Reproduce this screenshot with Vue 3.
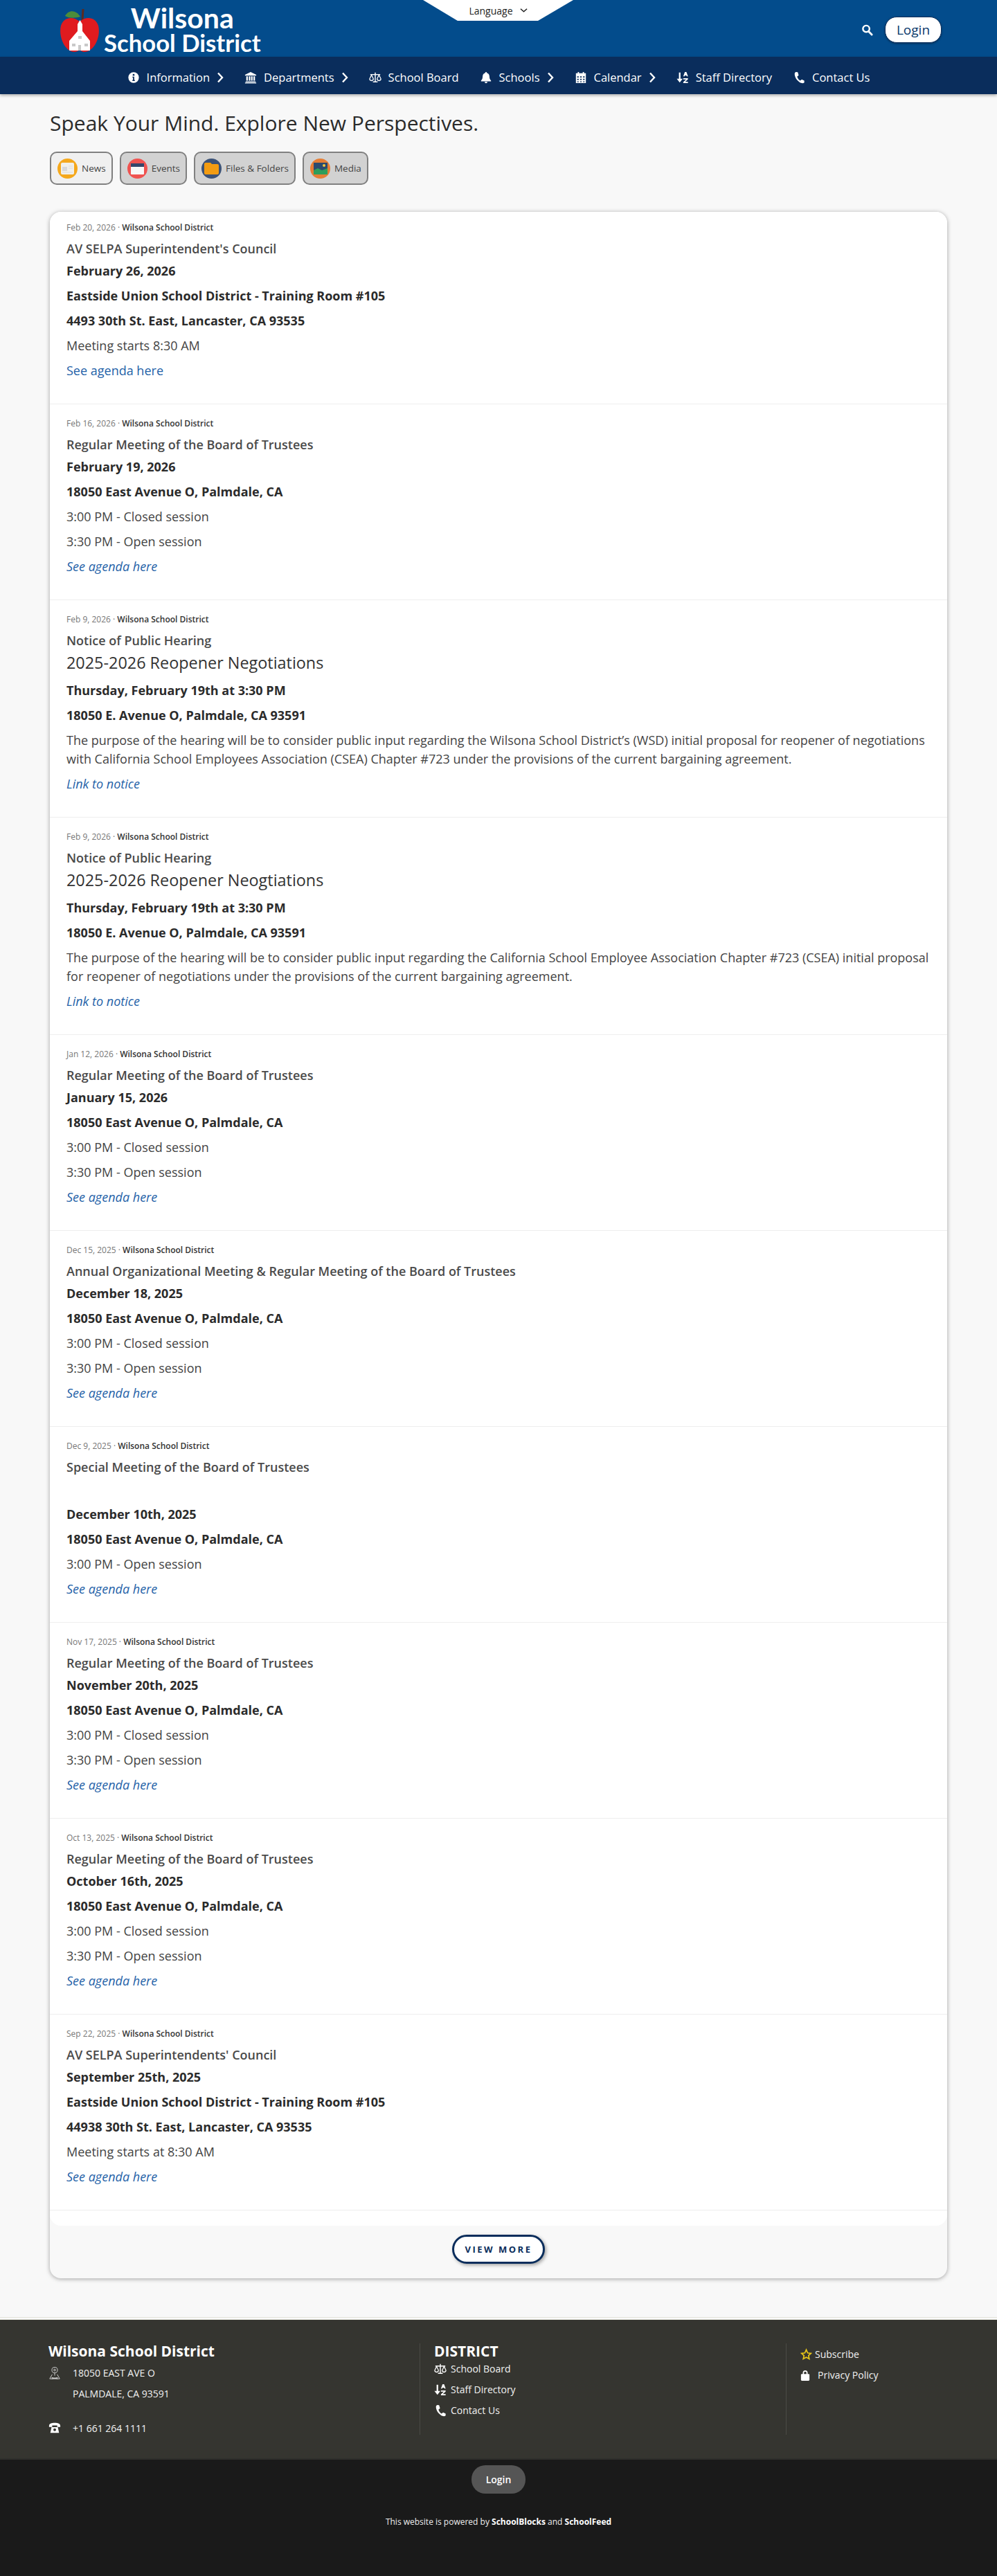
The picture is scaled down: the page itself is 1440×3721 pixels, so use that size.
<script setup>
const navItems = [
  { label: 'Information', icon: 'info', more: true },
  { label: 'Departments', icon: 'bank', more: true },
  { label: 'School Board', icon: 'scale', more: false },
  { label: 'Schools', icon: 'bell', more: true },
  { label: 'Calendar', icon: 'calendar', more: true },
  { label: 'Staff Directory', icon: 'sort', more: false },
  { label: 'Contact Us', icon: 'phone', more: false }
]

const tabs = [
  { label: 'News', kind: 'news', active: true },
  { label: 'Events', kind: 'events' },
  { label: 'Files & Folders', kind: 'files' },
  { label: 'Media', kind: 'media' }
]

const board = (stamp, day) => ({
  stamp,
  title: 'Regular Meeting of the Board of Trustees',
  bold: [day, '18050 East Avenue O, Palmdale, CA'],
  lines: ['3:00 PM - Closed session', '3:30 PM - Open session'],
  link: 'See agenda here'
})

const posts = [
  {
    stamp: 'Feb 20, 2026',
    title: "AV SELPA Superintendent's Council",
    bold: ['February 26, 2026', 'Eastside Union School District - Training Room #105', '4493 30th St. East, Lancaster, CA 93535'],
    lines: ['Meeting starts 8:30 AM'],
    link: 'See agenda here',
    plainLink: true
  },
  board('Feb 16, 2026', 'February 19, 2026'),
  {
    stamp: 'Feb 9, 2026',
    title: 'Notice of Public Hearing',
    big: '2025-2026 Reopener Negotiations',
    bold: ['Thursday, February 19th at 3:30 PM', '18050 E. Avenue O, Palmdale, CA 93591'],
    lines: ["The purpose of the hearing will be to consider public input regarding the Wilsona School District’s (WSD) initial proposal for reopener of negotiations with California School Employees Association (CSEA) Chapter #723 under the provisions of the current bargaining agreement."],
    link: 'Link to notice'
  },
  {
    stamp: 'Feb 9, 2026',
    title: 'Notice of Public Hearing',
    big: '2025-2026 Reopener Neogtiations',
    bold: ['Thursday, February 19th at 3:30 PM', '18050 E. Avenue O, Palmdale, CA 93591'],
    lines: ['The purpose of the hearing will be to consider public input regarding the California School Employee Association Chapter #723 (CSEA) initial proposal for reopener of negotiations under the provisions of the current bargaining agreement.'],
    link: 'Link to notice'
  },
  board('Jan 12, 2026', 'January 15, 2026'),
  {
    ...board('Dec 15, 2025', 'December 18, 2025'),
    title: 'Annual Organizational Meeting & Regular Meeting of the Board of Trustees'
  },
  {
    stamp: 'Dec 9, 2025',
    title: 'Special Meeting of the Board of Trustees',
    spacer: true,
    bold: ['December 10th, 2025', '18050 East Avenue O, Palmdale, CA'],
    lines: ['3:00 PM - Open session'],
    link: 'See agenda here'
  },
  board('Nov 17, 2025', 'November 20th, 2025'),
  board('Oct 13, 2025', 'October 16th, 2025'),
  {
    stamp: 'Sep 22, 2025',
    title: "AV SELPA Superintendents' Council",
    bold: ['September 25th, 2025', 'Eastside Union School District - Training Room #105', '44938 30th St. East, Lancaster, CA 93535'],
    lines: ['Meeting starts at 8:30 AM'],
    link: 'See agenda here'
  }
]
</script>

<template>
  <div class="page">
    <header class="topbar">
      <a class="logo">
        <svg class="apple" viewBox="0 0 58 66" width="58" height="66">
          <path d="M8 12C14 2 24 4 30 13C24 15 14 16 8 12Z" fill="#4c8c3a" />
          <path d="M34 2L33 18" stroke="#5a2a20" stroke-width="3" />
          <path d="M29 20C38 12 52 13 56 26C60 42 50 64 36 64C32 64 31 62 29 62C27 62 25 64 21 64C8 64 -2 42 2 26C6 13 20 12 29 20Z" fill="#e01b1f" />
          <path d="M26 24L29.500 18L33 24V34L44 48V62H14V48L26 34Z" fill="#fff" />
          <path d="M27 41h5v4h-5zM18 52h5v4h-5zM36 52h5v4h-5zM27 54h4v8h-4z" fill="#c9c9c9" />
        </svg>
        <span class="wordmark">
          <span class="word-top">Wilsona</span>
          <span class="word-bottom">School District</span>
        </span>
      </a>
      <div class="lang">
        <span>Language</span>
        <svg viewBox="0 0 12 8" width="11" height="8"><path d="M1 1.500L6 6L11 1.500" fill="none" stroke="#222" stroke-width="1.600" /></svg>
      </div>
      <div class="top-actions">
        <svg viewBox="0 0 18 18" width="17" height="18"><circle cx="7.500" cy="7.500" r="5" fill="none" stroke="#fff" stroke-width="2.600" /><path d="M11 11.500L16 16.500" stroke="#fff" stroke-width="3" stroke-linecap="round" /></svg>
        <button class="login">Login</button>
      </div>
    </header>

    <nav class="mainnav">
      <a v-for="item in navItems" :key="item.label" class="nav-link">
        <svg class="nav-icon" viewBox="0 0 20 20" fill="#fff">
          <template v-if="item.icon === 'info'">
            <circle cx="10" cy="10" r="8.500" />
            <circle cx="10" cy="5.800" r="1.500" fill="#0a2d5c" />
            <path d="M8 8.500h3v5.500h1v1.500H8V14h1v-4H8z" fill="#0a2d5c" />
          </template>
          <template v-else-if="item.icon === 'bank'">
            <path d="M10 1L19 5.500V7H1V5.500Z" />
            <path d="M3 8h2.500v7H3zM7 8h2.500v7H7zM10.700 8h2.500v7h-2.500zM14.500 8H17v7h-2.500zM2 16h16v1.500H2zM1 18h18v1.500H1z" />
          </template>
          <template v-else-if="item.icon === 'scale'">
            <path d="M9.200 2h1.600v14h3v1.800H6.200V16h3z" />
            <path d="M2 4.500h16V6H2z" />
            <path d="M4 6L1 12a3 3 0 0 0 6 0z" fill="none" stroke="#fff" stroke-width="1.400" />
            <path d="M16 6L13 12a3 3 0 0 0 6 0z" fill="none" stroke="#fff" stroke-width="1.400" />
          </template>
          <template v-else-if="item.icon === 'bell'">
            <path d="M10 1a1.500 1.500 0 0 1 1.500 1.700C14.500 3.500 15.500 6 15.500 9c0 3.500 1.500 4.500 2.500 6v1H2v-1c1-1.500 2.500-2.500 2.500-6 0-3 1-5.500 4-6.300A1.500 1.500 0 0 1 10 1z" />
            <path d="M7.800 17h4.400a2.200 2.200 0 0 1-4.400 0z" />
          </template>
          <template v-else-if="item.icon === 'calendar'">
            <path fill-rule="evenodd" d="M5 1h2v2h6V1h2v2h3v16H2V3h3zM4 8v2h2.500V8zm4.700 0v2h2.600V8zm4.800 0v2H16V8zM4 12v2h2.500v-2zm4.700 0v2h2.600v-2zm4.800 0v2H16v-2zM4 16v1.500h2.500V16zm4.700 0v1.500h2.600V16zm4.800 0v1.500H16V16z" />
          </template>
          <template v-else-if="item.icon === 'sort'">
            <path d="M4 2h2.500v10H10l-4.700 6L.5 12H4z" />
            <path d="M13.500 1h2.500l2.500 7h-2l-.4-1.200h-2.700L13 8h-2zM11 11h7.500v1.800L14 17h4.500v2H11v-1.800L15.500 13H11z" />
          </template>
          <template v-else>
            <path d="M5 1L8 1.500L9.500 6.500L7 8.500C8 11.500 9.500 13.500 12 15L14.500 13L18.500 15V18C17 19.500 14 19.500 11 17.500C6.500 14.500 3 9.500 3 4C3 2.800 3.800 1.500 5 1Z" />
          </template>
        </svg>
        <span>{{ item.label }}</span>
        <svg v-if="item.more" class="nav-chev" viewBox="0 0 10 16"><path d="M2 1.500L8 8L2 14.500" fill="none" stroke="#fff" stroke-width="2.400" /></svg>
      </a>
    </nav>

    <main class="content">
      <h1>Speak Your Mind. Explore New Perspectives.</h1>
      <div class="tabs">
        <button v-for="tab in tabs" :key="tab.label" class="tab" :class="{ active: tab.active }">
          <svg class="tab-icon" viewBox="0 0 29 29">
            <template v-if="tab.kind === 'news'">
              <circle cx="14.500" cy="14.500" r="14.500" fill="#f5a81c" />
              <rect x="5" y="6" width="19" height="17" rx="2" fill="#f1efe9" />
              <rect x="7" y="12" width="7" height="6" fill="#d8d8d8" />
              <path d="M16 11h6M16 14h6M7 20h15" stroke="#dcdcdc" />
            </template>
            <template v-else-if="tab.kind === 'events'">
              <circle cx="14.500" cy="14.500" r="14.500" fill="#ef5350" />
              <rect x="5" y="7" width="19" height="16" rx="1" fill="#f7f7f7" />
              <rect x="5" y="7" width="19" height="5" fill="#34466b" />
            </template>
            <template v-else-if="tab.kind === 'files'">
              <circle cx="14.500" cy="14.500" r="14.500" fill="#3c5378" />
              <path d="M4 8a2 2 0 0 1 2-2h7l2 2h8a2 2 0 0 1 2 2v11a2 2 0 0 1-2 2H6a2 2 0 0 1-2-2z" fill="#f39c12" />
            </template>
            <template v-else>
              <circle cx="14.500" cy="14.500" r="14.500" fill="#e67e35" />
              <rect x="5" y="6" width="20" height="17" fill="#2c4a6e" />
              <path d="M5 23v-6l6-3 6 3 8-3v9z" fill="#2e9e5b" />
              <circle cx="20" cy="10" r="2" fill="#f4c542" />
            </template>
          </svg>
          <span>{{ tab.label }}</span>
        </button>
      </div>

      <section class="feed">
        <div class="feed-list">
          <article v-for="(post, i) in posts" :key="i" class="post">
            <div class="post-meta">{{ post.stamp }} · <b>Wilsona School District</b></div>
            <div class="post-title">{{ post.title }}</div>
            <div v-if="post.big" class="post-big">{{ post.big }}</div>
            <div v-if="post.spacer" class="post-spacer"></div>
            <div class="post-body" :class="{ 'after-big': post.big }">
              <p v-for="line in post.bold" :key="line" class="strong">{{ line }}</p>
              <p v-for="line in post.lines" :key="line">{{ line }}</p>
            </div>
            <a class="post-link" :class="{ plain: post.plainLink }">{{ post.link }}</a>
          </article>
        </div>
        <div class="feed-foot">
          <button class="more">VIEW MORE</button>
        </div>
      </section>
    </main>

    <footer class="footer">
      <div class="foot-col foot-left">
        <h3>Wilsona School District</h3>
        <div class="addr">
          <svg viewBox="0 0 20 22" width="18" height="20" fill="none" stroke="#ddd" stroke-width="1"><circle cx="10" cy="6" r="4.500" /><circle cx="10" cy="6" r="1.500" /><path d="M10 11v4M6 13L2 20h16l-4-7M5 18l10 2M15 18L5 20" /></svg>
          <div>
            <div>18050 EAST AVE O</div>
            <div class="addr-2">PALMDALE, CA 93591</div>
          </div>
        </div>
        <div class="addr tel">
          <svg viewBox="0 0 20 20" width="18" height="18" fill="#fff"><path d="M1 7C1 3 5 2 10 2s9 1 9 5v1.500h-5V6H6v2.500H1z" /><path d="M5 9h10l2 9H3z" /><circle cx="10" cy="13" r="2.200" fill="#353530" /></svg>
          <span>+1 661 264 1111</span>
        </div>
      </div>
      <div class="foot-col foot-mid">
        <h3>DISTRICT</h3>
        <a class="foot-link">
          <svg viewBox="0 0 20 20" width="18" height="18" fill="#fff"><path d="M9.200 2h1.600v14h3v1.800H6.200V16h3zM2 4.500h16V6H2z" /><path d="M4 6L1 12a3 3 0 0 0 6 0zM16 6L13 12a3 3 0 0 0 6 0z" fill="none" stroke="#fff" stroke-width="1.400" /></svg>
          School Board
        </a>
        <a class="foot-link">
          <svg viewBox="0 0 20 20" width="18" height="18" fill="#fff"><path d="M4 2h2.500v10H10l-4.700 6L.5 12H4zM13.500 1h2.500l2.500 7h-2l-.4-1.200h-2.700L13 8h-2zM11 11h7.500v1.800L14 17h4.500v2H11v-1.800L15.500 13H11z" /></svg>
          Staff Directory
        </a>
        <a class="foot-link">
          <svg viewBox="0 0 20 20" width="18" height="18" fill="#fff"><path d="M5 1L8 1.500L9.500 6.500L7 8.500C8 11.500 9.500 13.500 12 15L14.500 13L18.500 15V18C17 19.500 14 19.500 11 17.500C6.500 14.500 3 9.500 3 4C3 2.800 3.800 1.500 5 1Z" /></svg>
          Contact Us
        </a>
      </div>
      <div class="foot-col foot-right">
        <a class="foot-link sub">
          <svg viewBox="0 0 20 20" width="17" height="18"><path d="M10 2L12.400 7.400L18 8L13.800 11.800L15 17.500L10 14.600L5 17.500L6.200 11.800L2 8L7.600 7.400Z" fill="none" stroke="#e6c619" stroke-width="2" /></svg>
          Subscribe
        </a>
        <a class="foot-link priv">
          <svg viewBox="0 0 16 20" width="14" height="18" fill="#fff"><path d="M4 9V6a4 4 0 0 1 8 0v3h-2V6a2 2 0 0 0-4 0v3z" /><rect x="1" y="8" width="14" height="11" rx="1.500" /></svg>
          Privacy Policy
        </a>
      </div>
    </footer>

    <div class="subfooter">
      <button class="foot-login">Login</button>
      <p>This website is powered by <b>SchoolBlocks</b> and <b>SchoolFeed</b></p>
    </div>
  </div>
</template>

<style>
html, body {
  margin: 0;
  background: #f8f8f8;
}
</style>

<style scoped>
.page {
  font-family: "Open Sans", "Noto Sans", sans-serif;
  color: #333;
  min-height: 3721px;
  display: flex;
  flex-direction: column;
}

button {
  font-family: inherit;
  cursor: pointer;
}

/* header */
.topbar {
  position: relative;
  height: 82px;
  background: #034c8c;
  display: flex;
  align-items: center;
  padding: 0 80px 0 86px;
}

.logo {
  display: flex;
  align-items: flex-start;
  height: 82px;
}

.apple {
  margin-top: 11px;
  flex-shrink: 0;
}

.wordmark {
  display: flex;
  flex-direction: column;
  align-items: center;
  margin-left: 6px;
  margin-top: 8px;
  color: #fff;
  font-family: Lato, sans-serif;
  font-weight: 700;
}

.word-top {
  font-size: 41px;
  line-height: 36px;
}

.word-bottom {
  font-size: 34.700px;
  line-height: 33px;
  margin-top: 1px;
}

.lang {
  position: absolute;
  top: 0;
  left: 611px;
  width: 217px;
  height: 30px;
  background: #fff;
  clip-path: polygon(0 0, 100% 0, 76.500% 100%, 23% 100%);
  display: flex;
  align-items: center;
  justify-content: center;
  gap: 10px;
  font-size: 14px;
  color: #222;
}

.top-actions {
  margin-left: auto;
  margin-top: 4px;
  display: flex;
  align-items: center;
  gap: 17px;
}

.login {
  width: 82px;
  height: 38px;
  border: 1px solid #0a2d5c;
  border-radius: 17px;
  background: #fff;
  color: #0a3a6b;
  font-size: 19px;
  padding: 0;
  box-shadow: 0 1px 3px rgba(0, 0, 0, 0.4);
}

.mainnav {
  height: 54px;
  box-sizing: border-box;
  padding-top: 5px;
  background: #0a2d5c;
  display: flex;
  align-items: center;
  justify-content: center;
  gap: 30px;
  box-shadow: 0 2px 4px rgba(0, 0, 0, 0.3);
  position: relative;
}

.nav-link {
  display: flex;
  align-items: center;
  gap: 10px;
  color: #fff;
  font-size: 16.500px;
}

.nav-icon {
  width: 18px;
  height: 18px;
}

.nav-chev {
  width: 10px;
  height: 16px;
}

/* main column */
.content {
  padding: 0 72px;
  flex: 1;
}

h1 {
  margin: 20px 0 0;
  font-size: 30px;
  line-height: 44px;
  font-weight: 400;
  color: #2b2b2b;
}

.tabs {
  display: flex;
  gap: 10px;
  margin-top: 19px;
}

.tab {
  height: 48px;
  display: flex;
  align-items: center;
  gap: 6px;
  padding: 0 8px 0 9px;
  border: 2px solid #808080;
  border-radius: 10px;
  background: #d2d2d2;
  color: #444;
  font-size: 13.500px;
}

.tab.active {
  background: #f0f0f0;
}

.tab-icon {
  width: 29px;
  height: 29px;
}

.feed {
  margin-top: 39px;
  border-radius: 16px;
  background: #f8f8f8;
  box-shadow: 0 1px 6px rgba(0, 0, 0, 0.35);
}

.feed-list {
  background: #fff;
  border-radius: 16px;
  padding-bottom: 22px;
}

.post {
  padding: 20px 24px 35px;
  border-bottom: 1px solid #eee;
}

.post:first-child {
  padding-top: 15px;
}

.post-meta {
  font-size: 12px;
  line-height: 16px;
  color: #777;
}

.post-meta b {
  font-weight: 600;
  color: #333;
}

.post-title {
  font-size: 18px;
  line-height: 24px;
  margin-top: 10px;
  font-weight: 600;
  color: #4a4a4a;
}

.post-big {
  font-size: 23.400px;
  line-height: 35px;
  margin-top: 3px;
  color: #333;
}

.post-spacer {
  height: 36px;
}

.post-body {
  padding-top: 7px;
}

.post-body.after-big {
  padding-top: 9px;
}

p {
  margin: 9px 0 0;
  font-size: 18px;
  line-height: 27px;
  color: #444;
}

.post-body p:first-child {
  margin-top: 0;
}

.strong {
  color: #2b2b2b;
  font-weight: 700;
}

.post-link {
  display: block;
  margin-top: 9px;
  font-size: 18px;
  line-height: 26px;
  font-style: italic;
  color: #1f62a8;
}

.post-link.plain {
  font-style: normal;
}

.feed-foot {
  height: 76px;
  box-sizing: border-box;
  padding-top: 13px;
  display: flex;
  align-items: flex-start;
  justify-content: center;
}

.more {
  width: 134px;
  height: 42px;
  border: 3px solid #0a2d5c;
  border-radius: 21px;
  background: #fff;
  color: #0a2d5c;
  font-size: 13px;
  font-weight: 700;
  letter-spacing: 2.500px;
  box-shadow: 2px 2px 5px rgba(0, 0, 0, 0.35);
}

/* footer */
.footer {
  margin-top: 56px;
  height: 204px;
  background: #353530;
  background-clip: padding-box;
  border-top: 4px double #e4e4da;
  display: flex;
  box-sizing: border-box;
  color: #f2f2f2;
  padding: 34px 0 0 70px;
}

.foot-col {
  height: 132px;
  box-sizing: border-box;
}

.foot-left {
  width: 536px;
}

.foot-mid {
  width: 529px;
  border-left: 1px solid #4a4a45;
  padding-left: 20px;
}

.foot-right {
  border-left: 1px solid #4a4a45;
  padding-left: 20px;
  padding-top: 6px;
}

h3 {
  margin: 0;
  font-size: 21px;
  line-height: 22px;
  font-weight: 700;
  color: #fff;
}

.addr {
  display: flex;
  align-items: flex-start;
  gap: 17px;
  font-size: 14px;
  line-height: 20px;
  margin-top: 11px;
}

.addr-2 {
  margin-top: 10px;
}

.tel {
  margin-top: 30px;
}

.foot-link {
  display: flex;
  align-items: center;
  gap: 6px;
  font-size: 14px;
  line-height: 20px;
  margin-top: 10px;
  color: #f2f2f2;
}

.foot-mid h3 + .foot-link {
  margin-top: 5px;
}

.foot-right .foot-link:first-child {
  margin-top: 0;
}

.sub {
  gap: 4px;
}

.priv {
  gap: 11px;
}

.subfooter {
  height: 171px;
  background: #1a1a1a;
  border-top: 2px solid #2e2e2c;
  box-sizing: border-box;
  display: flex;
  flex-direction: column;
  align-items: center;
  padding-top: 8px;
  color: #eee;
}

.foot-login {
  width: 78px;
  height: 41px;
  border: 0;
  border-radius: 20px;
  background: #555;
  color: #fff;
  font-size: 14px;
  font-weight: 600;
}

.subfooter p {
  margin: 33px 0 0;
  font-size: 12px;
  line-height: 16px;
  color: #eee;
}

.subfooter b {
  color: #fff;
}
</style>
